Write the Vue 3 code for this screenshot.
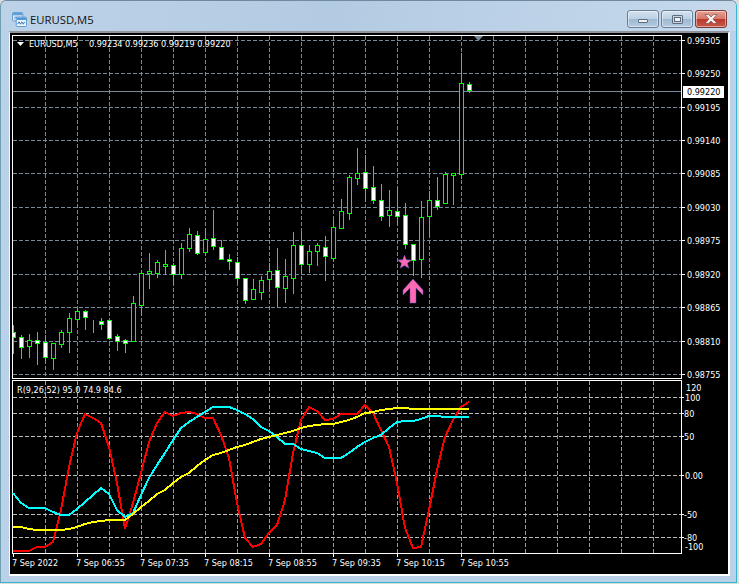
<script setup>
const candleRows = [
  [332,337,325,353,1],[337,347,335,358,1],[340,346,334,357,0],[340,343,332,364,1],[342,357,335,362,1],
  [343,358,343,369,0],[332,344,330,347,0],[318,332,313,352,0],[311,319,309,326,0],[311,317,310,329,1],
  [321,321,320,332,0],[321,324,318,329,1],[320,338,320,338,1],[336,341,334,350,1],[340,343,339,352,1],
  [303,341,296,341,0],[273,305,270,315,0],[271,273,253,288,0],[262,273,260,277,0],[264,266,250,274,0],
  [265,274,263,284,1],[248,274,243,278,0],[234,248,228,251,0],[235,253,231,254,1],[239,252,228,255,0],
  [238,246,210,249,1],[247,259,240,259,1],[259,261,254,269,1],[262,278,257,283,1],[278,300,278,303,1],
  [289,299,279,299,0],[280,292,276,299,0],[271,279,263,290,0],[270,287,248,306,1],[276,288,259,302,0],
  [245,278,232,293,0],[245,264,232,273,1],[251,264,245,272,0],[245,251,243,265,0],[247,256,236,280,1],
  [227,258,219,260,0],[211,228,199,228,0],[177,213,175,219,0],[173,178,148,184,0],
  [172,188,155,201,1],[187,200,166,203,1],[200,216,184,220,1],[210,215,190,226,0],[211,216,187,224,1],
  [215,244,203,248,1],[244,260,244,275,1],[217,259,201,277,0],[200,216,191,236,0],[200,206,177,209,1],
  [174,203,172,203,0],[173,175,173,204,0],[83,174,53,178,0],[84,90,82,92,1]
]
const candles = candleRows.map((r, i) => ({
  x: 13 + i * 8, top: r[0], bottom: r[1], high: r[2], low: r[3], white: r[4] === 1
}))

const toPoints = (ys) => ys.map((y, i) => `${13 + i * 8},${y}`).join(' ')
const red = toPoints([551,551,551,547,547,542,510,467,433,414,418,423,447,483,529,503,473,442,423,412,416,413,412,414,418,418,435,458,503,538,547,544,533,525,500,453,420,407,411,420,419,414,414,414,405,413,430,447,483,528,548,547,510,470,437,420,407,402])
const cyan = toPoints([493,503,508,508,508,512,515,515,509,502,495,488,494,510,517,513,495,478,465,453,440,428,422,417,412,407,407,407,410,414,419,427,431,437,444,444,449,451,453,458,458,458,453,447,442,438,435,428,422,421,421,419,416,416,417,417,417,417])
const yellow = toPoints([527,527,529,530,530,530,530,529,527,524,522,521,520,520,520,514,507,501,494,490,483,477,473,466,460,455,453,450,447,445,442,439,437,435,433,431,428,426,425,424,424,422,420,417,413,412,410,409,408,408,409,409,409,409,409,409,409,409])

const gridX = Array.from({ length: 20 }, (_, i) => 45 + i * 32)
const priceAxis = [
  ['0.99305',40],['0.99250',73],['0.99195',107],['0.99140',140],['0.99085',173],['0.99030',207],
  ['0.98975',240],['0.98920',274],['0.98865',307],['0.98810',341],['0.98755',374]
].map(([label, y]) => ({ label, y }))
const levels = [397,413,436,475,514,537]
const indicatorAxis = [
  ['120',686,387],['100',685,397],['80',684,413],['50',684,436],['0.00',685,475],
  ['-50',684,514],['-80',684,537],['-100',685,546]
].map(([label, x, y]) => ({ label, x, y }))
const timeAxis = [
  ['7 Sep 2022',12,13],['7 Sep 06:55',76,77],['7 Sep 07:35',140,141],['7 Sep 08:15',204,205],
  ['7 Sep 08:55',268,269],['7 Sep 09:35',332,333],['7 Sep 10:15',396,397],['7 Sep 10:55',460,461]
].map(([label, x, tick]) => ({ label, x, tick }))
</script>

<template>
  <div class="window">
    <header class="titlebar">
      <svg class="app-icon" width="15" height="15" viewBox="0 0 16 16">
        <rect x="0.5" y="0.5" width="11" height="9" rx="1" fill="#d8e8f6" stroke="#5d9ad0" />
        <rect x="1" y="1" width="10" height="2.5" fill="#5f9fd8" />
        <path d="M2.5 7 L4 5 L6 6.5 L8 5" fill="none" stroke="#4f7fb0" />
        <rect x="4.5" y="5.5" width="11" height="10" rx="1" fill="#eef5fb" stroke="#4f94d2" />
        <rect x="5" y="6" width="10" height="2.5" fill="#4d97d8" />
        <path d="M6 13 L7.5 10.5 L9 13 L10.5 10.5 L12 13 L13.5 10.5" fill="none" stroke="#2f6fa8" />
      </svg>
      <span class="title">EURUSD,M5</span>
      <div class="controls">
        <button class="ctl"><span class="glyph-min"></span></button>
        <button class="ctl"><span class="glyph-max"></span></button>
        <button class="ctl close">
          <svg width="14" height="10" viewBox="0 0 14 10">
            <path d="M1 0.5 H4.5 L7 3 L9.5 0.5 H13 L9 5 L13 9.5 H9.5 L7 7 L4.5 9.5 H1 L5 5 Z" fill="#f4f4f4" stroke="#7a4a45" stroke-width="0.7" />
          </svg>
        </button>
      </div>
    </header>
    <main class="client">
      <svg class="chart" width="718" height="541" viewBox="10 33 718 541">
        <defs>
          <clipPath id="main-plot"><rect x="13" y="36" width="668" height="342" /></clipPath>
        </defs>
        <g class="grid">
          <line v-for="y in priceAxis" :key="y.label" x1="13" x2="681" :y1="y.y + 0.5" :y2="y.y + 0.5" />
          <line v-for="x in gridX" :key="'m' + x" :x1="x + 0.5" :x2="x + 0.5" y1="36" y2="378" />
        </g>
        <g class="grid sub-v">
          <line v-for="x in gridX" :key="'s' + x" :x1="x + 0.5" :x2="x + 0.5" y1="381" y2="553" />
        </g>
        <g class="grid sub-h">
          <line v-for="y in levels" :key="'l' + y" x1="13" x2="681" :y1="y + 0.5" :y2="y + 0.5" />
        </g>

        <line class="bid" x1="13" x2="681" y1="91.5" y2="91.5" />

        <g clip-path="url(#main-plot)">
          <g v-for="c in candles" :key="c.x">
            <rect class="wick" :x="c.x" :y="c.high" width="1" :height="c.low - c.high + 1" />
            <rect :class="c.white ? 'body white' : 'body'" :x="c.x - 1.5" :y="c.top + 0.5" width="4" :height="c.bottom - c.top" />
          </g>
        </g>

        <polygon class="marker" points="404.5,255 406.3,259.8 411.5,260 407.4,263.2 408.9,268.3 404.5,265.4 400.1,268.3 401.6,263.2 397.5,260 402.7,259.8" />
        <polygon class="marker" points="413,279 423,290 423,295 416,288 416,303 410,303 410,288 403,295 403,290" />
        <polygon class="shift" points="474,36 483,36 478.5,41" />

        <rect class="frame" x="12.5" y="35.5" width="669" height="342.5" />
        <rect class="frame" x="12.5" y="380.5" width="669" height="172.5" />

        <polyline class="series red" :points="red" />
        <polyline class="series cyan" :points="cyan" />
        <polyline class="series yellow" :points="yellow" />

        <g v-for="p in priceAxis" :key="'p' + p.label">
          <rect class="tick" x="682" :y="p.y" width="3" height="1" />
          <text class="axis" x="687" :y="p.y + 4">{{ p.label }}</text>
        </g>
        <rect x="683" y="86" width="41" height="12" fill="#fff" />
        <text class="axis dark" x="687" y="95">0.99220</text>

        <g v-for="l in levels" :key="'t' + l">
          <rect class="tick" x="682" :y="l" width="2" height="1" />
        </g>
        <text v-for="a in indicatorAxis" :key="a.label" class="axis" :x="a.x" :y="a.y + 4">{{ a.label }}</text>

        <g v-for="t in timeAxis" :key="t.label">
          <rect class="tick" :x="t.tick" y="553" width="1" height="4" />
          <text class="axis" :x="t.x" y="566">{{ t.label }}</text>
        </g>

        <polygon points="17,42 24,42 20.5,46" fill="#fff" />
        <text class="axis" x="29" y="47">EURUSD,M5</text>
        <text class="axis" x="89" y="47">0.99234 0.99236 0.99219 0.99220</text>
        <text class="axis" x="17" y="393">R(9,26,52) 95.0 74.9 84.6</text>
      </svg>
    </main>
  </div>
</template>

<style>
html, body {
  background: #dcdcdc;
}
</style>

<style scoped>
.window {
  box-sizing: border-box;
  width: 737px;
  height: 583px;
  display: flex;
  flex-direction: column;
  padding: 0 6px 6px 8px;
  background: #b9d1e9;
  border: 1px solid #35b4cc;
  border-top-color: #6f8a9c;
  border-left-color: #6f9fb0;
  border-radius: 6px 6px 0 0;
}
.titlebar {
  box-sizing: border-box;
  height: 30px;
  flex: none;
  display: flex;
  align-items: center;
  gap: 3px;
  margin: 0 -6px 0 -8px;
  padding: 6px 9px 0 11px;
  background: linear-gradient(100deg, #bcd2e8 0%, #b3cbe2 45%, #c6d9ec 100%);
  border-radius: 5px 5px 0 0;
}
.app-icon {
  flex: none;
}
.title {
  font: 11.3px "Open Sans", "Noto Sans", sans-serif;
  color: #111;
}
.controls {
  margin-left: auto;
  display: flex;
  gap: 2px;
}
.ctl {
  box-sizing: border-box;
  width: 32px;
  height: 18px;
  padding: 0;
  display: flex;
  align-items: center;
  justify-content: center;
  border: 1px solid #6a7f95;
  border-radius: 3px;
  background: linear-gradient(#d3e2f0 0%, #bcd0e3 48%, #9db8d2 52%, #b5cce2 100%);
  box-shadow: inset 0 0 0 1px rgba(255, 255, 255, 0.45);
}
.close {
  background: linear-gradient(#e6a195 0%, #d8776a 48%, #bb3a2d 52%, #c9584a 100%);
  border-color: #7d3a33;
}
.glyph-min {
  width: 10px;
  height: 4px;
  margin-top: 3px;
  box-sizing: border-box;
  background: #f0f0f0;
  border: 1px solid #5d6b7c;
  border-radius: 1px;
}
.glyph-max {
  width: 11px;
  height: 9px;
  box-sizing: border-box;
  background: #f0f4f8;
  border: 1px solid #5d6b7c;
  box-shadow: inset 0 0 0 1px #c7d5e2, inset 0 0 0 2px #5d6b7c;
  border-radius: 1px;
}
.client {
  flex: 1;
  min-height: 0;
  background: #000;
  border-style: solid;
  border-width: 2px 2px 2px 1px;
  border-color: #8e9499 #fff #fff #f4f8fc;
}
.chart {
  display: block;
  background: #000;
}
.grid line {
  stroke: #778899;
  stroke-width: 1;
  stroke-dasharray: 4 2;
  shape-rendering: crispEdges;
}
.sub-v line {
  stroke: #9a9a9a;
}
.sub-h line {
  stroke: #bdbdbd;
}
.bid {
  stroke: #778899;
  shape-rendering: crispEdges;
}
.wick {
  fill: #00ff00;
  shape-rendering: crispEdges;
}
.body {
  fill: #000;
  stroke: #00ff00;
  stroke-width: 1;
  shape-rendering: crispEdges;
}
.body.white {
  fill: #fff;
}
.marker {
  fill: #ff69b4;
  stroke: #5a50c0;
  stroke-width: 0.5;
}
.shift {
  fill: #778899;
}
.frame {
  fill: none;
  stroke: #fff;
  shape-rendering: crispEdges;
}
.series {
  fill: none;
  stroke-width: 2;
  shape-rendering: crispEdges;
}
.red { stroke: #ff0000; }
.cyan { stroke: #00ffff; }
.yellow { stroke: #ffff00; }
.tick {
  fill: #fff;
}
.axis {
  font: 9px "DejaVu Sans Condensed", "DejaVu Sans", sans-serif;
  font-stretch: condensed;
  fill: #fff;
}
.axis.dark {
  fill: #000;
}
</style>
